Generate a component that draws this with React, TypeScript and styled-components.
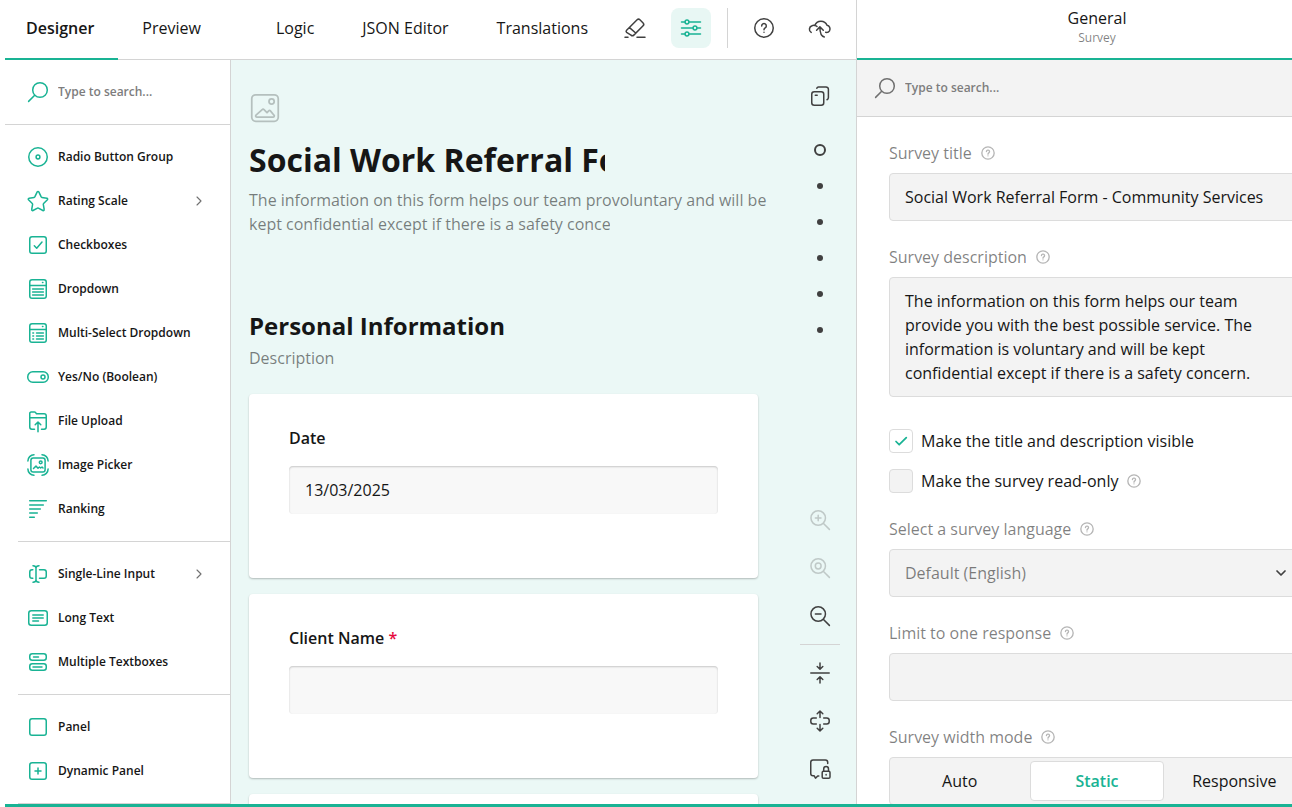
import React, { useState } from 'react';
import styled, { createGlobalStyle, css } from 'styled-components';

const GREEN = '#19b394';
const LINE = '#d4d4d4';
const INK = '#161616';
const MUTED = 'rgba(0, 0, 0, 0.5)';
const MINT = '#ebf8f6';

const GlobalStyle = createGlobalStyle`
  *, *::before, *::after { box-sizing: border-box; }
  body {
    margin: 0;
    background: #fff;
    color: ${INK};
    font-family: 'Open Sans', 'Noto Sans', sans-serif;
    font-size: 16px;
    line-height: 24px;
  }
  button, input, textarea, select { font: inherit; color: inherit; }
  h1, h2, h3, p { margin: 0; }
`;

/* ---------- icons ---------- */

const Glyph = styled.svg<{ $size?: number; $stroke?: number }>`
  flex: none;
  display: block;
  width: ${p => p.$size ?? 24}px;
  height: ${p => p.$size ?? 24}px;
  fill: none;
  stroke: currentColor;
  stroke-width: ${p => p.$stroke ?? 1.5};
  stroke-linecap: round;
  stroke-linejoin: round;
`;

const shapes: Record<string, React.ReactNode> = {
  search: (
    <>
      <circle cx="14" cy="10" r="7.3" />
      <path d="M8.7 15.3 2.6 21.4" />
    </>
  ),
  radio: (
    <>
      <circle cx="12" cy="12" r="9.25" />
      <circle cx="12" cy="12" r="1.9" />
    </>
  ),
  star: (
    <path d="M11.2 2.9a.9.9 0 0 1 1.6 0l2.4 5a1 1 0 0 0 .7.5l5 .8a.9.9 0 0 1 .5 1.5l-3.8 3.8a1 1 0 0 0-.3.8l.9 5.2a.9.9 0 0 1-1.3 1l-4.5-2.4a1 1 0 0 0-.9 0L7 21.5a.9.9 0 0 1-1.3-1l.9-5.2a1 1 0 0 0-.3-.8l-3.8-3.8A.9.9 0 0 1 3.1 9.2l5-.8a1 1 0 0 0 .7-.5z" />
  ),
  check: (
    <>
      <rect x="3.75" y="3.75" width="16.5" height="16.5" rx="2.25" />
      <path d="M8.3 12.8 10.7 15.2 16 9" />
    </>
  ),
  dropdown: (
    <>
      <rect x="3.75" y="2.75" width="16.5" height="18.5" rx="2.25" />
      <path d="M4 8.5H20M6.6 12H17.4M6.6 15H17.4M6.6 18H17.4M16.5 5.6h.4" />
    </>
  ),
  multi: (
    <>
      <rect x="3.75" y="2.75" width="16.5" height="18.5" rx="2.25" />
      <path d="M4 8.5H20M6.8 12h.8M10.5 12h6.9M6.8 15h.8M10.5 15h6.9M6.8 18h.8M10.5 18h6.9M16.5 5.6h.4" />
    </>
  ),
  toggle: (
    <>
      <rect x="1.75" y="6.75" width="20.5" height="10.5" rx="5" />
      <circle cx="17" cy="12" r="2" />
    </>
  ),
  upload: (
    <path d="M8.5 20.25H5.9a2.2 2.2 0 0 1-2.15-2.2V4.75A1.5 1.5 0 0 1 5.25 3h3.2a1.5 1.5 0 0 1 1.2.6l.8 1.15h7.6a2.2 2.2 0 0 1 2.2 2.2v11.1a2.2 2.2 0 0 1-2.2 2.2H15.5M4 8.75h16M12 22.8V13.5M9.2 15.8 12 13l2.8 2.8" />
  ),
  image: (
    <>
      <rect x="4.9" y="4.9" width="14.2" height="14.2" rx="2.25" />
      <circle cx="14.7" cy="9.3" r="1.4" />
      <path d="M7.5 15.5 10 13l2 2.2 1.5-1.2 1.2 1 1.3-1 1 1" />
      <path d="M1.9 8A6.2 6.2 0 0 1 8 1.8M16 1.8A6.2 6.2 0 0 1 22.1 8M22.1 16a6.2 6.2 0 0 1-6.1 6.2M8 22.2A6.2 6.2 0 0 1 1.9 16" />
    </>
  ),
  ranking: <path d="M3.7 3.8H20.3M3.7 7.9H17.3M3.7 12H14.3M3.7 16.1H11.3M3.7 20.2H8.3" />,
  input: (
    <path d="M7 3.7q3 .1 3 2.3v12q0 2.2-3 2.3M13 3.7q-3 .1-3 2.3M10 18q0 2.2 3 2.3M6.8 7.75H6a2.25 2.25 0 0 0-2.25 2.25v4A2.25 2.25 0 0 0 6 16.25h.8M13.5 7.75H18A2.25 2.25 0 0 1 20.25 10v4A2.25 2.25 0 0 1 18 16.25H13.5" />
  ),
  longtext: (
    <>
      <rect x="2.75" y="4.75" width="18.5" height="14.5" rx="2.5" />
      <path d="M6.8 9H17.2M6.8 12H17.2M6.8 15H12.5" />
    </>
  ),
  textboxes: (
    <>
      <rect x="3.75" y="3.75" width="16.5" height="6.5" rx="2.5" />
      <rect x="3.75" y="13.75" width="16.5" height="6.5" rx="2.5" />
      <path d="M7.5 7H12.5M7 17H16" />
    </>
  ),
  panel: <rect x="3.75" y="3.75" width="16.5" height="16.5" rx="2.25" />,
  dynamic: (
    <>
      <rect x="3.75" y="3.75" width="16.5" height="16.5" rx="2.25" />
      <path d="M12 9v6M9 12h6" />
    </>
  ),
  eraser: (
    <path d="M3.6 14.3 14.1 3.8a2 2 0 0 1 2.8 0l3.2 3.2a2 2 0 0 1 0 2.8L10.8 19.1a2 2 0 0 1-2.8 0L3.6 16.4a1.5 1.5 0 0 1 0-2.1zM6.5 11.6l6.2 5.4M2 21.25H5M14 21.25H22" />
  ),
  sliders: (
    <>
      <path d="M2.5 6H5.8M10.2 6H21.5M2.5 12H13.8M18.2 12H21.5M2.5 18H5.8M10.2 18H21.5" />
      <circle cx="8" cy="6" r="1.9" />
      <circle cx="16" cy="12" r="1.9" />
      <circle cx="8" cy="18" r="1.9" />
    </>
  ),
  help: (
    <>
      <circle cx="12" cy="12" r="9.25" />
      <path d="M9.7 9.9a2.3 2.3 0 1 1 3.5 2c-.8.5-1.2.9-1.2 1.8M12 16.2v.1" />
    </>
  ),
  cloud: (
    <path d="M3.2 16.4A3.7 3.7 0 0 1 4 9.7q1.5-.6 2.8-.2A6.5 6.5 0 0 1 19 9.3a3.7 3.7 0 0 1 2.5 5.5q-1.3 2-3.8 1.5M7 9.5q1.3.2 2 1M16.3 20.9Q11.9 20 11.9 11.2M8.6 14.2 11.9 10.9l3.4 3.3" />
  ),
  copy: (
    <>
      <rect x="3.75" y="7.75" width="12" height="13.5" rx="2.5" />
      <path d="M8.8 4.2A2 2 0 0 1 10.5 2.9H18A2.4 2.4 0 0 1 20.4 5.3V13.5A2.3 2.3 0 0 1 19 15.7M7.3 11.2H9.2" />
    </>
  ),
  picture: (
    <>
      <rect x="2.75" y="2.75" width="26.5" height="26.5" rx="4" />
      <circle cx="22.6" cy="9.4" r="2.6" />
      <path d="M7.9 25.2h16.2a1.2 1.2 0 0 0 .9-2l-3.6-4.3a1.2 1.2 0 0 0-1.7-.1l-1.7 1.9-3-3.1a1.2 1.2 0 0 0-1.8.1L7 23.2a1.2 1.2 0 0 0 .9 2z" />
    </>
  ),
  zoomIn: (
    <>
      <circle cx="10.2" cy="10" r="7.25" />
      <path d="M15.5 15.5 21.4 21.4M10.2 7.2v5.6M7.4 10h5.6" />
    </>
  ),
  zoomReset: (
    <>
      <circle cx="10.2" cy="10" r="7.25" />
      <circle cx="10.2" cy="10" r="2.9" />
      <path d="M15.5 15.5 21.4 21.4" />
    </>
  ),
  zoomOut: (
    <>
      <circle cx="10.2" cy="10" r="7.25" />
      <path d="M15.5 15.5 21.4 21.4M7.4 10h5.6" />
    </>
  ),
  collapse: (
    <path d="M2.8 12H21.2M12 2V8M9.2 5.5 12 8.2l2.8-2.7M12 22V16M9.2 18.5 12 15.8l2.8 2.7" />
  ),
  expand: (
    <path d="M12 8.5V2.2M9.2 4.7 12 2l2.8 2.7M12 15.5V21.8M9.2 19.3 12 22l2.8-2.7M8.3 9H5.3A2.5 2.5 0 0 0 2.8 11.5v1A2.5 2.5 0 0 0 5.3 15H8.3M15.7 9H18.7A2.5 2.5 0 0 1 21.2 11.5v1A2.5 2.5 0 0 1 18.7 15H15.7" />
  ),
  lock: (
    <>
      <path d="M19.7 6.5V5.3A2.3 2.3 0 0 0 17.4 3H5A2.3 2.3 0 0 0 2.75 5.3V16.5A2.3 2.3 0 0 0 5 18.8H6.2L7.5 21.2 9.7 18.9H10.8" />
      <rect x="14.2" y="14.2" width="7.8" height="7" rx="1.3" />
      <path d="M15.7 14V12a2.4 2.4 0 0 1 4.8 0V14M18.1 17.5v.4" />
    </>
  ),
};

const Icon = ({ name, size = 24, box = 24, stroke }: { name: string; size?: number; box?: number; stroke?: number }) => (
  <Glyph $size={size} $stroke={stroke} viewBox={`0 0 ${box} ${box}`} aria-hidden="true">
    {shapes[name]}
  </Glyph>
);

const Chevron = ({ down }: { down?: boolean }) => (
  <Glyph $size={12} $stroke={down ? 1.75 : 1.1} viewBox="0 0 12 12" aria-hidden="true">
    <path d={down ? 'M2 4l4 4 4-4' : 'M4 2l4 4-4 4'} />
  </Glyph>
);

/* ---------- shell ---------- */

const Shell = styled.div`
  display: grid;
  grid-template-columns: minmax(0, 1fr) 436px;
  grid-template-rows: minmax(0, 1fr);
  height: 100vh;
  margin-left: 5px;
  border-bottom: 3px solid ${GREEN};
  overflow: hidden;
`;

const Workspace = styled.div`
  display: flex;
  flex-direction: column;
  min-width: 0;
  min-height: 0;
`;

const TopBar = styled.header`
  display: flex;
  justify-content: space-between;
  flex: none;
  height: 60px;
  padding-right: 16px;
  border-bottom: 1px solid ${LINE};
`;

const Tabs = styled.nav`
  display: flex;
`;

const Tab = styled.button<{ $active?: boolean; $spaced?: boolean }>`
  height: 60px;
  padding: 0 24px 2px;
  margin-left: ${p => (p.$spaced ? 27 : 0)}px;
  border: 0;
  border-bottom: 2px solid transparent;
  background: none;
  white-space: nowrap;
  ${p =>
    p.$active &&
    css`
      padding-left: 21px;
      font-weight: 600;
      border-bottom-color: ${GREEN};
    `}
`;

const Actions = styled.div`
  display: flex;
  gap: 16px;
  padding-top: 8px;
`;

const IconButton = styled.button<{ $active?: boolean; $faded?: boolean }>`
  display: grid;
  place-items: center;
  flex: none;
  width: 40px;
  height: 40px;
  padding: 0;
  border: 0;
  border-radius: 8px;
  background: ${p => (p.$active ? '#e8f7f4' : 'transparent')};
  color: ${p => (p.$active ? GREEN : '#404040')};
  opacity: ${p => (p.$faded ? 0.25 : 1)};
`;

const BarDivider = styled.span`
  width: 1px;
  height: 40px;
  background: ${LINE};
`;

const Body = styled.div`
  display: grid;
  grid-template-columns: 226px minmax(0, 1fr);
  grid-template-rows: minmax(0, 1fr);
  flex: 1;
  min-height: 0;
`;

/* ---------- toolbox ---------- */

const Toolbox = styled.aside`
  overflow: hidden;
  border-right: 1px solid ${LINE};
`;

const SearchRow = styled.label<{ $panel?: boolean }>`
  display: flex;
  align-items: center;
  gap: 8px;
  height: ${p => (p.$panel ? 57 : 65)}px;
  padding: 0 16px 0 ${p => (p.$panel ? 16 : 21)}px;
  border-bottom: 1px solid ${LINE};
  background: ${p => (p.$panel ? '#f3f3f3' : '#fff')};
  color: ${p => (p.$panel ? '#707070' : GREEN)};
`;

const SearchInput = styled.input`
  flex: 1;
  min-width: 0;
  padding: 0;
  border: 0;
  outline: 0;
  background: none;
  color: ${INK};
  font-size: 12px;
  font-weight: 600;
  line-height: 16px;
  &::placeholder {
    color: #7d7d7d;
    opacity: 1;
  }
`;

const ToolGroup = styled.ul`
  margin: 0 0 0 13px;
  padding: 10px 0;
  border-bottom: 1px solid ${LINE};
  list-style: none;
`;

const ToolItem = styled.button`
  display: flex;
  align-items: center;
  gap: 8px;
  width: 100%;
  height: 44px;
  padding: 0 25px 0 8px;
  border: 0;
  background: none;
  color: ${GREEN};
`;

const ToolName = styled.span`
  flex: 1;
  color: ${INK};
  font-size: 12px;
  font-weight: 600;
  line-height: 16px;
  text-align: left;
`;

const ToolArrow = styled.span`
  color: #707070;
`;

/* ---------- design surface ---------- */

const Surface = styled.main`
  display: grid;
  grid-template-columns: minmax(0, 1fr) 40px;
  grid-template-rows: minmax(0, 1fr);
  gap: 42px;
  min-height: 0;
  padding: 0 16px 0 18px;
  overflow: hidden;
  background: ${MINT};
`;

const Survey = styled.div`
  padding-top: 32px;
`;

const LogoSlot = styled.div`
  height: 44px;
  color: #b5c0be;
`;

const SurveyTitle = styled.h1`
  width: 70%;
  overflow: hidden;
  font-size: 32px;
  font-weight: 700;
  line-height: 48px;
  white-space: nowrap;
`;

const Muted = styled.p`
  color: ${MUTED};
  white-space: nowrap;
`;

const Clipped = styled.span`
  display: block;
  width: 71%;
  overflow: hidden;
`;

const SurveyIntro = styled(Muted)`
  margin-top: 4px;
`;

const PageHeading = styled.h2`
  margin: 74px 0 4px;
  font-size: 24px;
  font-weight: 700;
  line-height: 32px;
`;

const Cards = styled.div`
  display: grid;
  gap: 16px;
  margin-top: 24px;
`;

const Card = styled.section`
  padding: 32px 40px 64px;
  border-radius: 4px;
  background: #fff;
  box-shadow: 0 1px 2px rgba(0, 0, 0, 0.25);
`;

const Question = styled.label`
  display: block;
  font-weight: 600;
`;

const Required = styled.span`
  color: #e60a3e;
`;

const Answer = styled.input`
  display: block;
  width: 100%;
  height: 48px;
  margin-top: 16px;
  padding: 0 16px;
  border: 0;
  border-radius: 4px;
  outline: 0;
  background: #f8f8f8;
  box-shadow: inset 0 1px 2px rgba(0, 0, 0, 0.2);
  font-weight: 400;
`;

const Rail = styled.div`
  display: flex;
  flex-direction: column;
  justify-content: space-between;
  min-height: 0;
  padding: 16px 0 15px;
`;

const RailGroup = styled.div`
  display: grid;
  gap: 8px;
`;

const PageDots = styled.div`
  display: grid;
  justify-items: center;
  grid-auto-rows: 36px;
  padding-top: 16px;
`;

const PageDot = styled.button<{ $current?: boolean }>`
  display: grid;
  place-items: center;
  width: 36px;
  height: 36px;
  padding: 0;
  border: 0;
  background: none;
  &::before {
    content: '';
    width: ${p => (p.$current ? 12 : 6)}px;
    height: ${p => (p.$current ? 12 : 6)}px;
    border: ${p => (p.$current ? '2px solid #404040' : '0')};
    border-radius: 50%;
    background: ${p => (p.$current ? 'transparent' : '#404040')};
  }
`;

const RailDivider = styled.span`
  height: 1px;
  background: ${LINE};
`;

/* ---------- property panel ---------- */

const Properties = styled.aside`
  min-height: 0;
  overflow: hidden;
  border-left: 1px solid ${LINE};
`;

const PanelSheet = styled.div`
  width: 480px;
`;

const PanelHeader = styled.header`
  height: 60px;
  padding-top: 6px;
  border-bottom: 2px solid ${GREEN};
  text-align: center;
`;

const PanelTitle = styled.h2`
  font-size: 16px;
  font-weight: 400;
  line-height: 24px;
`;

const PanelSubtitle = styled.p`
  color: ${MUTED};
  font-size: 12px;
  line-height: 16px;
`;

const Fields = styled.form`
  display: grid;
  gap: 24px;
  padding: 24px 32px;
`;

const Field = styled.div`
  display: grid;
  gap: 8px;
`;

const Caption = styled.div`
  display: flex;
  align-items: center;
  gap: 8px;
  color: ${MUTED};
`;

const Hint = styled.span`
  color: #b5b5b5;
`;

const box = css`
  display: block;
  width: 100%;
  border: 1px solid #dcdcdc;
  border-radius: 4px;
  outline: 0;
  background: #f3f3f3;
`;

const TextField = styled.input`
  ${box}
  height: 48px;
  padding: 0 15px;
`;

const TextArea = styled.textarea`
  ${box}
  height: 120px;
  padding: 11px 15px;
  resize: none;
  overflow: hidden;
`;

const SelectWrap = styled.div`
  position: relative;
`;

const SelectArrow = styled.span`
  position: absolute;
  top: 18px;
  right: 18px;
  color: #404040;
  pointer-events: none;
`;

const Select = styled.select`
  ${box}
  height: 48px;
  padding: 0 15px;
  appearance: none;
  color: ${MUTED};
`;

const Checks = styled.div`
  display: grid;
  gap: 16px;
  margin-top: 8px;
`;

const CheckRow = styled.label`
  display: flex;
  align-items: center;
  gap: 8px;
`;

const CheckBox = styled.span`
  position: relative;
  width: 24px;
  height: 24px;
`;

const CheckInput = styled.input`
  display: block;
  width: 24px;
  height: 24px;
  margin: 0;
  border: 1px solid #dcdcdc;
  border-radius: 4px;
  appearance: none;
  background: #f3f3f3;
  &:checked { background: #fff; }
`;

const CheckMark = styled.span`
  position: absolute;
  inset: 0;
  color: ${GREEN};
  pointer-events: none;
`;

const Segments = styled.div`
  ${box}
  display: grid;
  grid-template-columns: repeat(3, 1fr);
  gap: 4px;
  height: 48px;
  padding: 3px;
`;

const Segment = styled.button<{ $active?: boolean }>`
  padding: 0;
  border: 1px solid ${p => (p.$active ? '#dcdcdc' : 'transparent')};
  border-radius: 4px;
  background: ${p => (p.$active ? '#fff' : 'transparent')};
  color: ${p => (p.$active ? GREEN : INK)};
  font-weight: ${p => (p.$active ? 600 : 400)};
`;

/* ---------- content ---------- */

const tools: { icon: string; name: string; more?: boolean }[][] = [
  [
    { icon: 'radio', name: 'Radio Button Group' },
    { icon: 'star', name: 'Rating Scale', more: true },
    { icon: 'check', name: 'Checkboxes' },
    { icon: 'dropdown', name: 'Dropdown' },
    { icon: 'multi', name: 'Multi-Select Dropdown' },
    { icon: 'toggle', name: 'Yes/No (Boolean)' },
    { icon: 'upload', name: 'File Upload' },
    { icon: 'image', name: 'Image Picker' },
    { icon: 'ranking', name: 'Ranking' },
  ],
  [
    { icon: 'input', name: 'Single-Line Input', more: true },
    { icon: 'longtext', name: 'Long Text' },
    { icon: 'textboxes', name: 'Multiple Textboxes' },
  ],
  [
    { icon: 'panel', name: 'Panel' },
    { icon: 'dynamic', name: 'Dynamic Panel' },
  ],
];

const HelpHint = () => (
  <Hint>
    <Icon name="help" size={16} stroke={2} />
  </Hint>
);

const Label = ({ id, text }: { id: string; text: string }) => (
  <Caption>
    <label htmlFor={id} id={`${id}-label`}>{text}</label>
    <HelpHint />
  </Caption>
);

const Check = ({ text, initial, hint }: { text: string; initial: boolean; hint?: boolean }) => {
  const [on, setOn] = useState(initial);
  return (
    <CheckRow>
      <CheckBox>
        <CheckInput type="checkbox" checked={on} onChange={e => setOn(e.target.checked)} />
        {on && (
          <CheckMark>
            <Glyph $stroke={1.75} viewBox="0 0 24 24" aria-hidden="true">
              <path d="M7 12.5l3.2 3.2L17.3 8.6" />
            </Glyph>
          </CheckMark>
        )}
      </CheckBox>
      {text}
      {hint && <HelpHint />}
    </CheckRow>
  );
};

export default function App() {
  const [width, setWidth] = useState('Static');
  return (
    <>
      <GlobalStyle />
      <Shell>
        <Workspace>
          <TopBar>
            <Tabs>
              <Tab $active>Designer</Tab>
              <Tab>Preview</Tab>
              <Tab $spaced>Logic</Tab>
              <Tab>JSON Editor</Tab>
              <Tab>Translations</Tab>
            </Tabs>
            <Actions>
              <IconButton aria-label="Clear survey"><Icon name="eraser" /></IconButton>
              <IconButton aria-label="Settings" $active><Icon name="sliders" /></IconButton>
              <BarDivider />
              <IconButton aria-label="Help"><Icon name="help" /></IconButton>
              <IconButton aria-label="Save"><Icon name="cloud" /></IconButton>
            </Actions>
          </TopBar>
          <Body>
            <Toolbox>
              <SearchRow>
                <Icon name="search" />
                <SearchInput placeholder="Type to search..." aria-label="Search toolbox" />
              </SearchRow>
              {tools.map((group, i) => (
                <ToolGroup key={i}>
                  {group.map(tool => (
                    <li key={tool.name}>
                      <ToolItem>
                        <Icon name={tool.icon} />
                        <ToolName>{tool.name}</ToolName>
                        {tool.more && <ToolArrow><Chevron /></ToolArrow>}
                      </ToolItem>
                    </li>
                  ))}
                </ToolGroup>
              ))}
            </Toolbox>
            <Surface>
              <Survey>
                <LogoSlot><Icon name="picture" size={32} box={32} stroke={1.75} /></LogoSlot>
                <SurveyTitle>Social Work Referral Form</SurveyTitle>
                <SurveyIntro>
                  The information on this form helps our team provoluntary and will be
                  <Clipped>kept confidential except if there is a safety concern.</Clipped>
                </SurveyIntro>
                <PageHeading>Personal Information</PageHeading>
                <Muted>Description</Muted>
                <Cards>
                  <Card>
                    <Question>
                      Date
                      <Answer defaultValue="13/03/2025" />
                    </Question>
                  </Card>
                  <Card>
                    <Question>
                      Client Name <Required>*</Required>
                      <Answer />
                    </Question>
                  </Card>
                  <Card />
                </Cards>
              </Survey>
              <Rail>
                <div>
                  <IconButton aria-label="Pages"><Icon name="copy" /></IconButton>
                  <PageDots>
                    {[1, 2, 3, 4, 5, 6].map(n => (
                      <PageDot key={n} $current={n === 1} aria-label={`Page ${n}`} />
                    ))}
                  </PageDots>
                </div>
                <RailGroup>
                  <IconButton aria-label="Zoom in" $faded><Icon name="zoomIn" /></IconButton>
                  <IconButton aria-label="Zoom to 100%" $faded><Icon name="zoomReset" /></IconButton>
                  <IconButton aria-label="Zoom out"><Icon name="zoomOut" /></IconButton>
                  <RailDivider />
                  <IconButton aria-label="Collapse all"><Icon name="collapse" /></IconButton>
                  <IconButton aria-label="Expand all"><Icon name="expand" /></IconButton>
                  <IconButton aria-label="Lock questions"><Icon name="lock" /></IconButton>
                </RailGroup>
              </Rail>
            </Surface>
          </Body>
        </Workspace>
        <Properties>
          <PanelSheet>
            <PanelHeader>
              <PanelTitle>General</PanelTitle>
              <PanelSubtitle>Survey</PanelSubtitle>
            </PanelHeader>
            <SearchRow $panel>
              <Icon name="search" />
              <SearchInput placeholder="Type to search..." aria-label="Search properties" />
            </SearchRow>
            <Fields>
              <Field>
                <Label id="title" text="Survey title" />
                <TextField id="title" defaultValue="Social Work Referral Form - Community Services" />
              </Field>
              <Field>
                <Label id="description" text="Survey description" />
                <TextArea
                  id="description"
                  defaultValue="The information on this form helps our team provide you with the best possible service. The information is voluntary and will be kept confidential except if there is a safety concern."
                />
              </Field>
              <Checks>
                <Check text="Make the title and description visible" initial />
                <Check text="Make the survey read-only" initial={false} hint />
              </Checks>
              <Field>
                <Label id="language" text="Select a survey language" />
                <SelectWrap>
                  <Select id="language">
                    <option>Default (English)</option>
                  </Select>
                  <SelectArrow><Chevron down /></SelectArrow>
                </SelectWrap>
              </Field>
              <Field>
                <Label id="limit" text="Limit to one response" />
                <TextField id="limit" />
              </Field>
              <Field>
                <Label id="width" text="Survey width mode" />
                <Segments id="width" role="group" aria-labelledby="width-label">
                  {['Auto', 'Static', 'Responsive'].map(mode => (
                    <Segment key={mode} type="button" $active={mode === width} onClick={() => setWidth(mode)}>
                      {mode}
                    </Segment>
                  ))}
                </Segments>
              </Field>
            </Fields>
          </PanelSheet>
        </Properties>
      </Shell>
    </>
  );
}
